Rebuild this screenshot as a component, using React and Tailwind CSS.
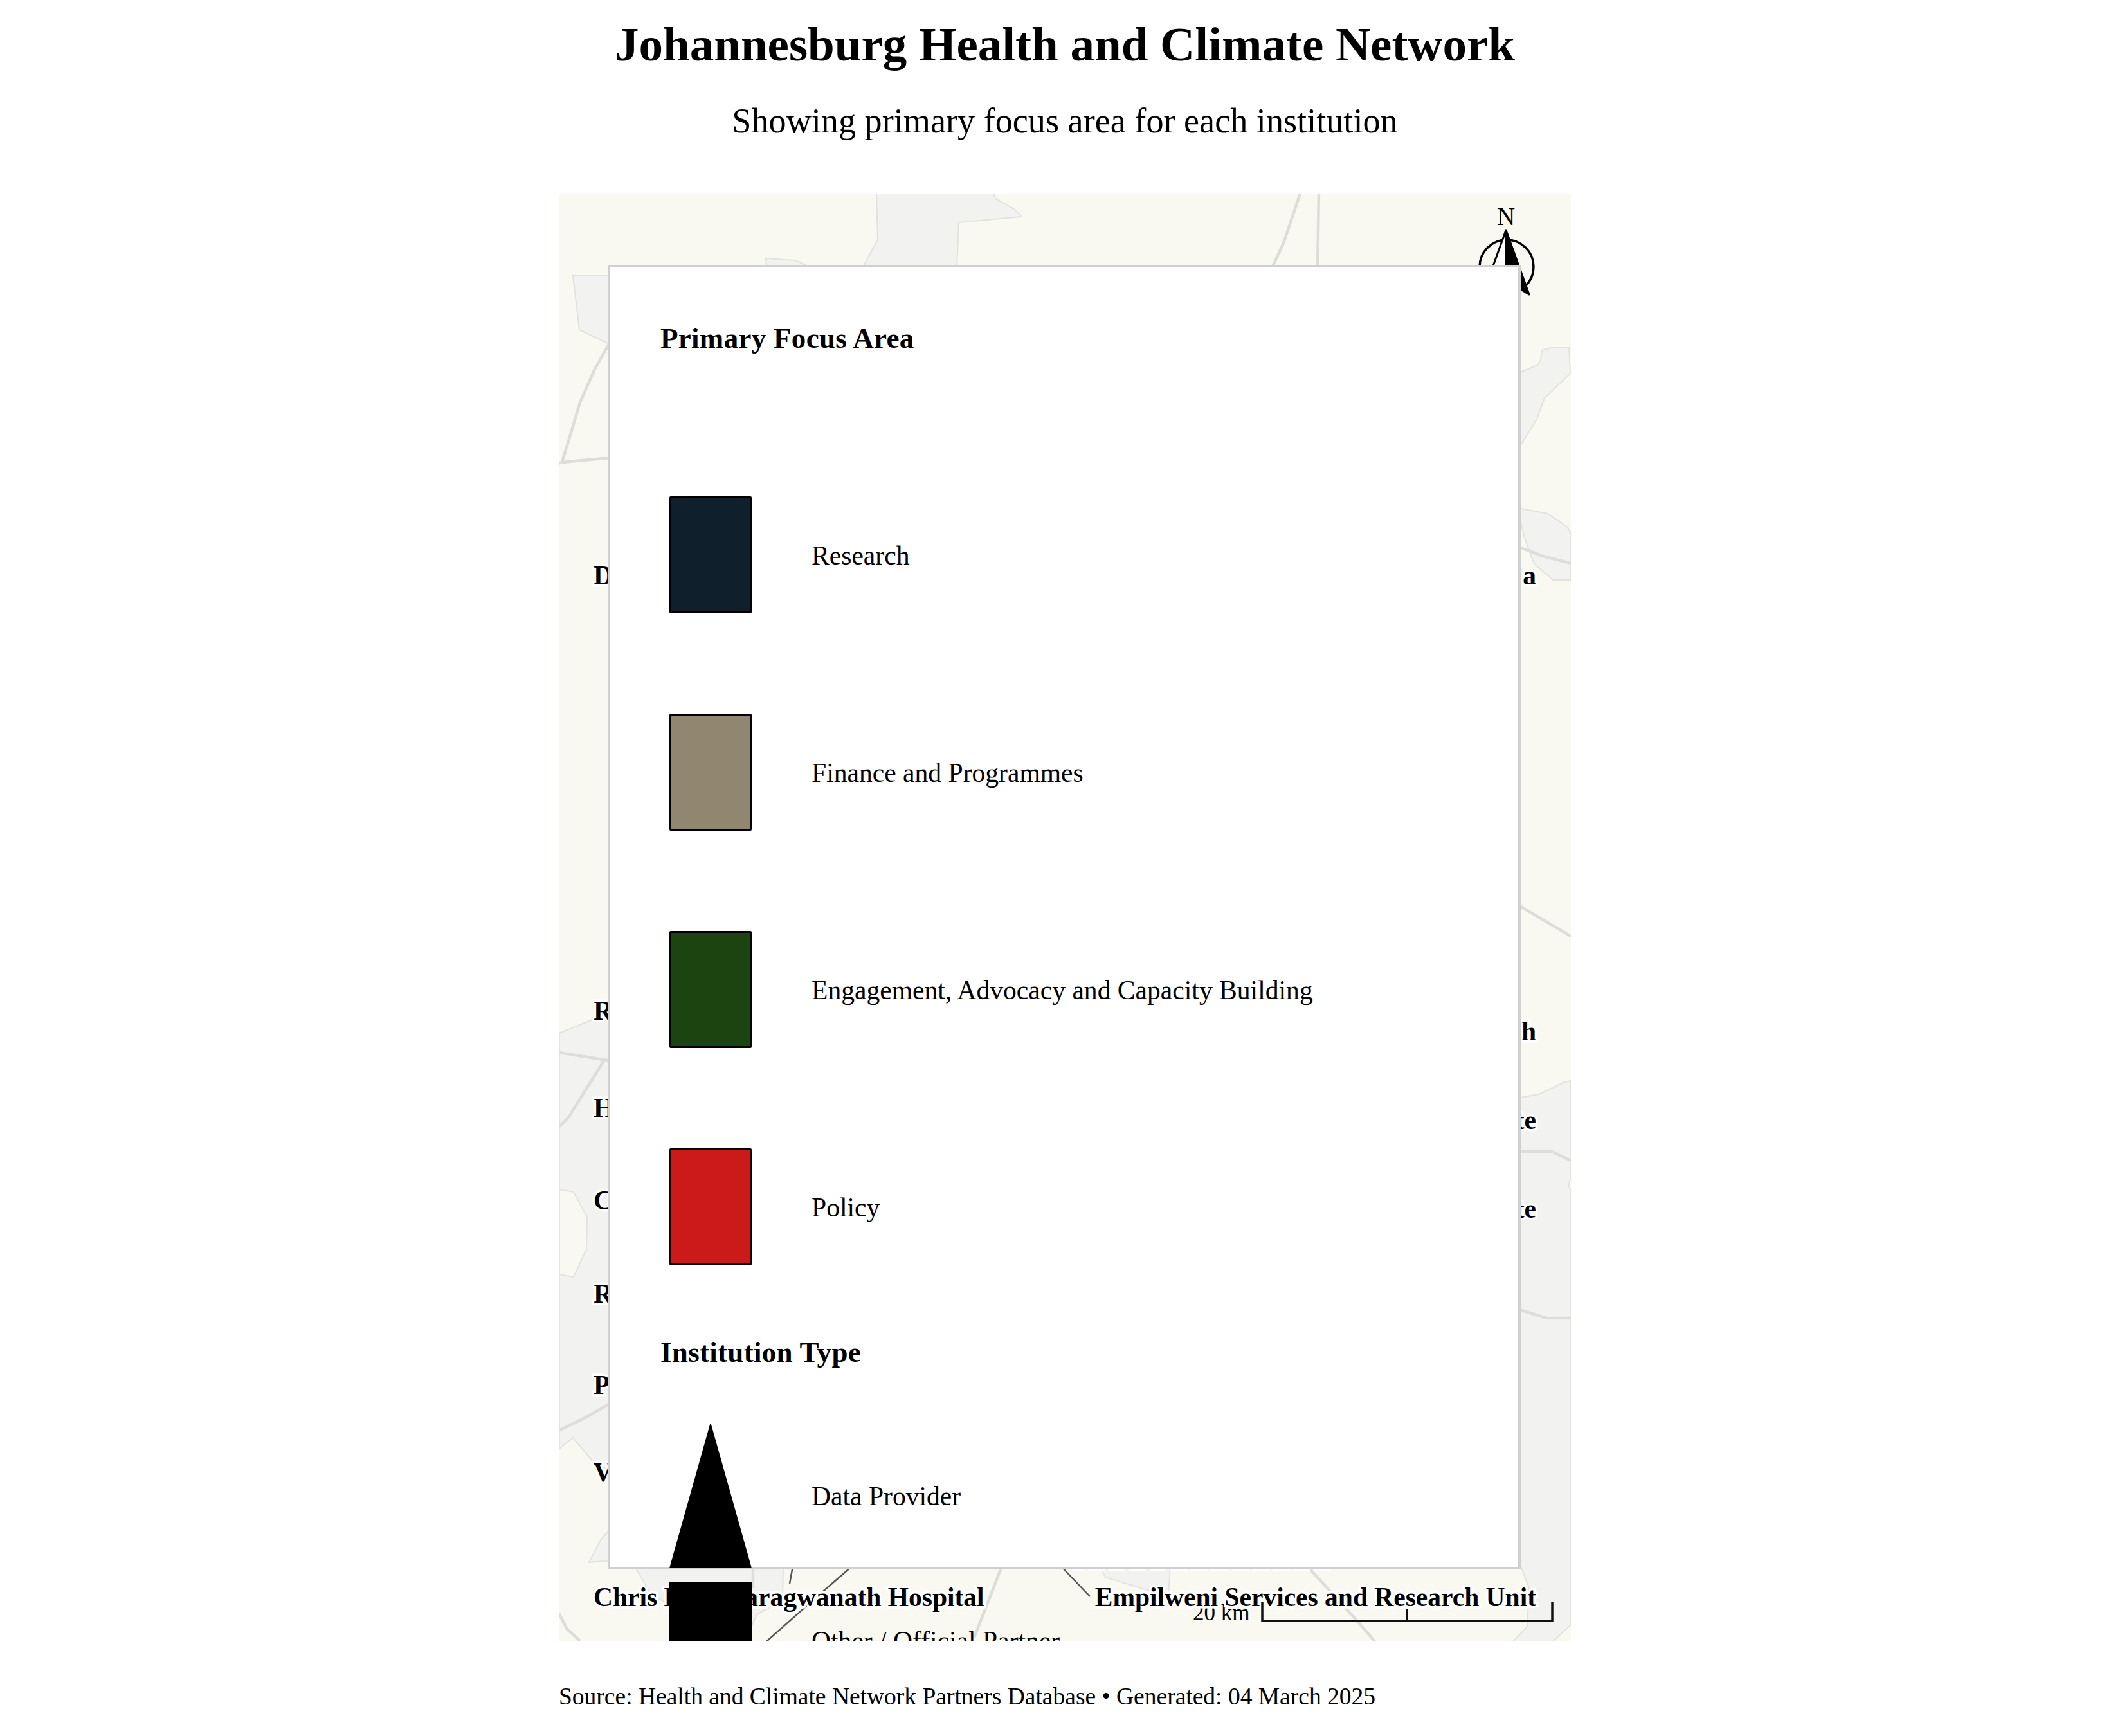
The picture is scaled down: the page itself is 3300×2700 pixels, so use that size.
const focusAreas = [
  { name: 'Research', swatch: 'bg-[#0f1f2b]' },
  { name: 'Finance and Programmes', swatch: 'bg-[#918670]' },
  { name: 'Engagement, Advocacy and Capacity Building', swatch: 'bg-[#1c4410]' },
  { name: 'Policy', swatch: 'bg-[#cc1a1a]' },
];

// gray areas and roads, in page coordinates (svg viewBox starts at the map corner)
const areas = [
  '1363,301 1365,373 1342,415 1488,415 1491,346 1589,337 1577,325 1548,309 1545,301',
  '1191,402 1237,405 1259,415 1192,415',
  '891,429 947,429 947,535 901,513',
  '2360,581 2391,568 2396,560 2398,545 2401,544 2415,540 2440,540 2442,581 2402,619 2390,652 2360,700',
  '2360,790 2407,799 2438,820 2443,830 2443,902 2415,902 2386,877 2371,837 2360,791',
  '869,1607 921,1586 950,1575 950,2290 922,2273 891,2236 869,2254',
  '916,2430 934,2395 950,2376 950,2427',
  '987,2436 1012,2479 1040,2495 1169,2529 1177,2511 1197,2500 1217,2490 1218,2436',
  '2360,1708 2393,1702 2433,1683 2443,1681 2443,1831 2439,1846 2443,1849 2443,2527 2415,2553 2353,2553 2375,2530 2378,2470 2365,2436 2360,2436',
  '1710,2436 1719,2453 1817,2483 1820,2436',
];

const roads = [
  '947,535 924,576 902,626 874,719 869,721',
  '874,719 950,712',
  '2022,301 1996,378 1979,415',
  '2051,301 2049,415',
  '2360,850 2400,865 2443,876',
  '2360,1407 2443,1456',
  '2360,1791 2413,1791 2443,1805',
  '2360,2036 2405,2050 2443,2050',
  '869,1637 950,1650',
  '939,1650 884,1738 869,1753',
  '869,2225 912,2204 950,2182',
  '869,2509 882,2534 902,2552',
  '1171,2436 1171,2470',
  '2033,2436 2107,2517 2138,2553',
  '1558,2436 1515,2547',
];

const darkLines = [
  '1233,2436 1228,2463',
  '1325,2436 1280,2475 1192,2553',
  '1650,2436 1695,2483',
];

const leftLabels = [
  { text: 'D', top: 'top-[570px]' },
  { text: 'R', top: 'top-[1247px]' },
  { text: 'H', top: 'top-[1398px]' },
  { text: 'C', top: 'top-[1542px]' },
  { text: 'R', top: 'top-[1687px]' },
  { text: 'P', top: 'top-[1829px]' },
  { text: 'V', top: 'top-[1965px]' },
  { text: 'Chris Hani Baragwanath Hospital', top: 'top-[2159px]' },
];

const rightLabels = [
  { text: 'a', top: 'top-[570px]' },
  { text: 'h', top: 'top-[1279px]' },
  { text: 'te', top: 'top-[1417px]' },
  { text: 'te', top: 'top-[1555px]' },
  { text: 'Empilweni Services and Research Unit', top: 'top-[2159px]' },
];

function MapBase() {
  return (
    <svg className="absolute inset-0" width="1574" height="2252" viewBox="869 301 1574 2252">
      {areas.map((points, i) => (
        <polygon key={i} points={points} fill="#f2f2f0" stroke="#e2e2df" strokeWidth="2" />
      ))}
      <polygon points="869,1850 892,1854 913,1893 912,1943 892,1986 869,1982" fill="#f9f9f2" stroke="#e2e2df" strokeWidth="2" />
      <line x1="870" y1="1607" x2="870" y2="2250" stroke="#e2e2df" strokeWidth="2" />
      {roads.map((points, i) => (
        <polyline key={i} points={points} fill="none" stroke="#dddddA" strokeWidth="4.5" />
      ))}
      {darkLines.map((points, i) => (
        <polyline key={i} points={points} fill="none" stroke="#555555" strokeWidth="2.5" />
      ))}
      <line x1="1660" y1="2442" x2="2070" y2="2442" stroke="#ffffff" strokeWidth="2" strokeDasharray="26 6" />
    </svg>
  );
}

function NorthArrow() {
  return (
    <svg className="absolute left-[1420px] top-[50px]" width="100" height="120" viewBox="2289 351 100 120">
      <circle cx="2343" cy="415" r="42" fill="none" stroke="#000000" strokeWidth="3.5" />
      <polygon points="2342,358 2306,458 2342,436" fill="#ffffff" stroke="#000000" strokeWidth="3" strokeLinejoin="round" />
      <polygon points="2342,358 2378,458 2342,436" fill="#000000" stroke="#000000" strokeWidth="3" strokeLinejoin="round" />
    </svg>
  );
}

function ScaleBar() {
  return (
    <svg className="absolute left-[1090px] top-[2185px]" width="460" height="50" viewBox="1959 2486 460 50">
      <path d="M1963 2492V2521H2414V2492M2188 2503V2521" fill="none" stroke="#111111" strokeWidth="3.5" />
    </svg>
  );
}

function Legend() {
  return (
    <div className="absolute left-[76px] top-[111px] w-[1420px] h-[2029px] border-4 border-[#d0d0d0] bg-white pl-[78px] pt-[76px]">
      <div className="h-[68px] flex items-center text-[45px] font-bold leading-none tracking-[0.3px]">Primary Focus Area</div>
      <div className="mt-[134px]">
        {focusAreas.map((area) => (
          <div key={area.name} className="h-[338px] flex items-center">
            <div className={`ml-[14px] w-[128px] h-[182px] border-[3px] border-black rounded-[2px] ${area.swatch}`} />
            <span className="ml-[93px] pt-[3px] text-[41.6px] leading-none">{area.name}</span>
          </div>
        ))}
      </div>
      <div className="mt-[23px] mb-[77px] h-[68px] flex items-center text-[45px] font-bold leading-none tracking-[0.3px]">Institution Type</div>
      <div className="h-[225px] flex items-center">
        <svg className="ml-[14px] shrink-0" width="128" height="225" viewBox="0 0 128 225">
          <polygon points="64,-2 128,225 0,225" fill="#000000" />
        </svg>
        <span className="ml-[93px] pt-[3px] text-[41.6px] leading-none">Data Provider</span>
      </div>
      <div className="h-[225px] flex items-center">
        <div className="ml-[14px] w-[128px] h-[182px] bg-black" />
        <span className="ml-[93px] pt-[3px] text-[41.6px] leading-none">Other / Official Partner</span>
      </div>
    </div>
  );
}

export default function App() {
  return (
    <div className="w-[3300px] h-[2700px] pl-[12px] bg-white text-black flex flex-col items-center font-['Liberation_Serif',serif]">
      <h1 className="mt-[26px] h-[84px] flex items-center text-[75px] font-bold leading-none">Johannesburg Health and Climate Network</h1>
      <p className="mt-[42px] h-[72px] flex items-center text-[54.2px] leading-none">Showing primary focus area for each institution</p>

      <div className="relative mt-[77px] w-[1574px] h-[2252px] shrink-0 overflow-hidden bg-[#f9f9f2]">
        <MapBase />
        <span className="absolute left-[1459px] top-[16px] text-[39px] leading-none">N</span>
        <NorthArrow />
        <span className="absolute left-[986px] top-[2190px] text-[35px] leading-none">20 km</span>

        {leftLabels.map((label) => (
          <span
            key={label.top}
            className={`absolute left-[54px] text-[41.5px] font-bold leading-[48px] whitespace-nowrap [-webkit-text-stroke:7px_white] [paint-order:stroke_fill] ${label.top}`}
          >
            {label.text}
          </span>
        ))}
        {rightLabels.map((label) => (
          <span
            key={label.top}
            className={`absolute right-[54px] text-[41.5px] font-bold leading-[48px] whitespace-nowrap [-webkit-text-stroke:7px_white] [paint-order:stroke_fill] ${label.top}`}
          >
            {label.text}
          </span>
        ))}

        <ScaleBar />
        <Legend />
      </div>

      <p className="mt-[62px] w-[1574px] text-[37.5px] leading-[48px]">Source: Health and Climate Network Partners Database • Generated: 04 March 2025</p>
    </div>
  );
}
